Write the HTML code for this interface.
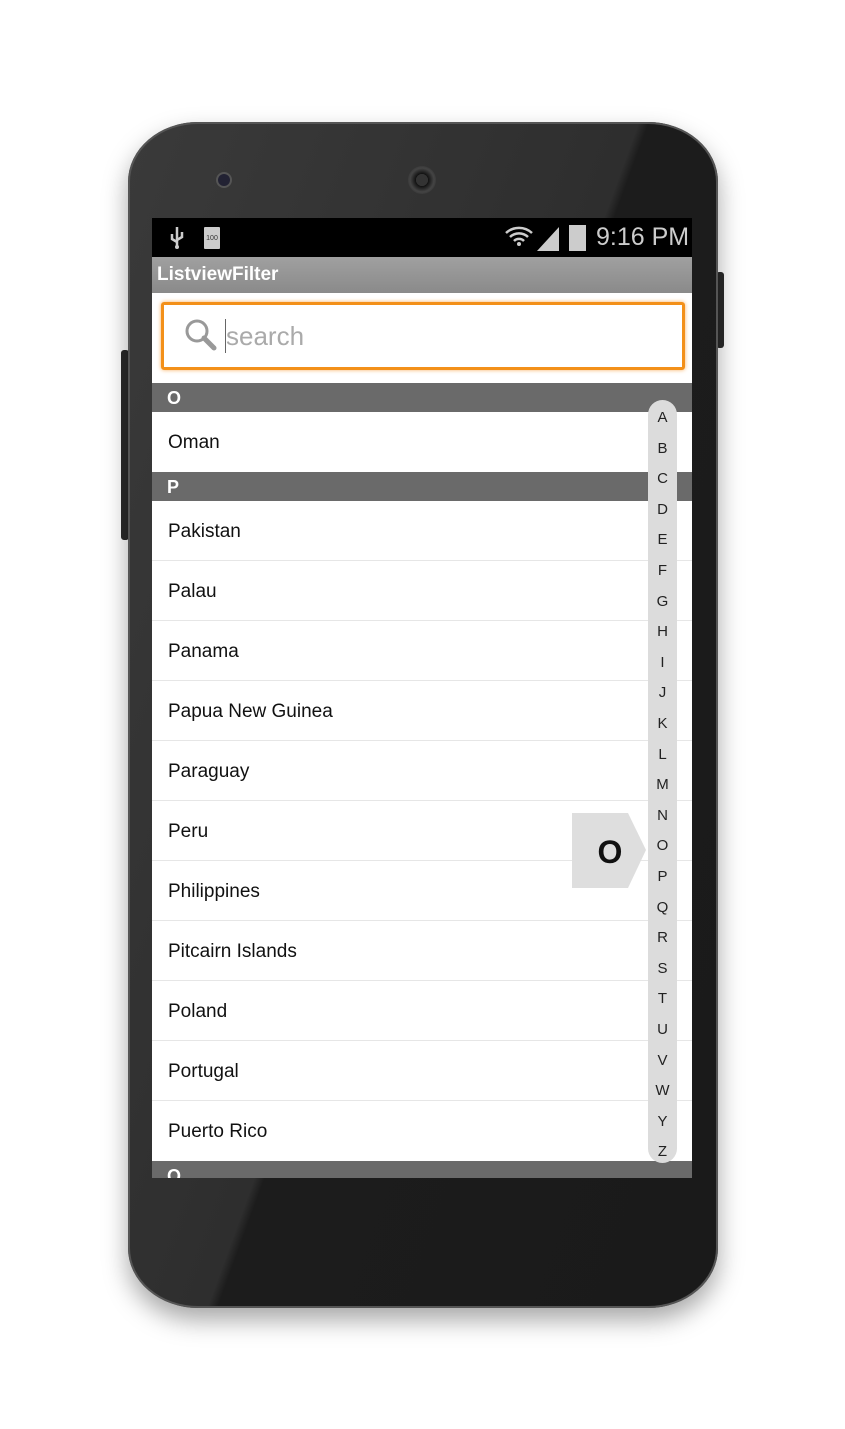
<!DOCTYPE html>
<html><head><style>
body{margin:0;width:845px;height:1429px;background:#fff;position:relative;overflow:hidden;font-family:"Liberation Sans",sans-serif}
.phone{position:absolute;left:128px;top:122px;width:590px;height:1186px;border-radius:70px/60px;background:linear-gradient(110deg,#3a3a3a 0%,#2e2e2e 50%,#1c1c1c 51%,#1a1a1a 100%);box-shadow:0 0 0 2px #555 inset,0 12px 25px rgba(0,0,0,.35)}
.btnl{position:absolute;left:121px;top:350px;width:8px;height:190px;background:#2a2a2a;border-radius:3px}
.btnr{position:absolute;left:716px;top:272px;width:8px;height:76px;background:#2a2a2a;border-radius:3px}
.screen{position:absolute;left:152px;top:218px;width:540px;height:960px;background:#fff;overflow:hidden}
.status{height:39px;background:#000;color:#ccc;position:relative}
.title{height:36px;background:linear-gradient(#a0a0a0,#8a8a8a);color:#fff;font-weight:bold;font-size:19px;line-height:36px;padding-left:5px}
.searchwrap{height:90px;position:relative}
.search{position:absolute;left:9px;top:9px;width:518px;height:62px;border:3px solid #f39019;border-radius:3px;box-shadow:0 0 4px #f8b060}
.hdr{height:29px;background:#6a6a6a;color:#fff;font-weight:bold;font-size:18px;line-height:31px;padding-left:15px}
.row{height:59px;border-bottom:1px solid #e6e6e6;font-size:19px;line-height:62px;padding-left:16px;color:#111}
.idx{position:absolute;left:648px;top:400px;width:29px;height:763px;background:#dcdcdc;border-radius:15px}
.idx div{position:absolute;left:0;width:29px;text-align:center;font-size:15px;color:#222}
</style></head><body>
<div class="btnl"></div><div class="btnr"></div>
<div class="phone">
<div style="position:absolute;left:90px;top:52px;width:12px;height:12px;border-radius:50%;background:#223;box-shadow:0 0 0 2px #555"></div>
<div style="position:absolute;left:280px;top:44px;width:28px;height:28px;border-radius:50%;background:radial-gradient(#333 30%,#111 31%,#444 60%,#222);"></div>
</div>
<div class="screen">
<div class="status">
<svg style="position:absolute;left:16px;top:8px" width="18" height="24" viewBox="0 0 18 24"><path d="M9 1v21M4 8v5l5 3M14 6v5l-5 3" stroke="#ccc" stroke-width="2.5" fill="none"/><circle cx="9" cy="21" r="2" fill="#ccc"/></svg>
<div style="position:absolute;left:52px;top:9px;width:16px;height:22px;background:#ccc;border-radius:1px;font-size:7px;color:#333;text-align:center;line-height:24px">100</div>
<svg style="position:absolute;left:352px;top:6px" width="30" height="26" viewBox="0 0 30 26"><path d="M2 9a19 19 0 0 1 26 0M6 13a13 13 0 0 1 18 0M10 17a7 7 0 0 1 10 0" stroke="#ccc" stroke-width="2.5" fill="none"/><circle cx="15" cy="20" r="2" fill="#ccc"/></svg>
<svg style="position:absolute;left:385px;top:9px" width="22" height="24"><path d="M0 24L22 0V24Z" fill="#ccc"/></svg>
<div style="position:absolute;left:417px;top:7px;width:17px;height:26px;background:#ccc"></div>
<div style="position:absolute;left:444px;top:5px;font-size:25px;color:#ccc">9:16 PM</div>
</div>
<div class="title">ListviewFilter</div>
<div class="searchwrap"><div class="search">
<svg style="position:absolute;left:19px;top:12px" width="36" height="36" viewBox="0 0 36 36"><circle cx="14" cy="14" r="10" stroke="#999" stroke-width="3" fill="none"/><path d="M21 21l10 10" stroke="#999" stroke-width="5" stroke-linecap="round"/></svg>
<div style="position:absolute;left:61px;top:14px;width:1px;height:34px;background:#666"></div>
<div style="position:absolute;left:62px;top:16px;font-size:26px;color:#aaa">search</div>
</div></div>
<div class="hdr">O</div>
<div class="row" style="border:0;height:60px">Oman</div>
<div class="hdr">P</div>
<div class="row">Pakistan</div><div class="row">Palau</div><div class="row">Panama</div><div class="row">Papua New Guinea</div><div class="row">Paraguay</div><div class="row">Peru</div><div class="row">Philippines</div><div class="row">Pitcairn Islands</div><div class="row">Poland</div><div class="row">Portugal</div><div class="row" style="border:0;height:60px">Puerto Rico</div>
<div class="hdr">Q</div>
</div>
<svg style="position:absolute;left:572px;top:813px" width="74" height="75"><path d="M0 0H56L74 37L56 75H0Z" fill="#dedede"/><text x="38" y="50" font-family="Liberation Sans" font-weight="bold" font-size="32" text-anchor="middle" fill="#111">O</text></svg>
<div class="idx">
<div style="top:9px">A</div><div style="top:40px">B</div><div style="top:70px">C</div><div style="top:101px">D</div><div style="top:131px">E</div><div style="top:162px">F</div><div style="top:193px">G</div><div style="top:223px">H</div><div style="top:254px">I</div><div style="top:284px">J</div><div style="top:315px">K</div><div style="top:346px">L</div><div style="top:376px">M</div><div style="top:407px">N</div><div style="top:437px">O</div><div style="top:468px">P</div><div style="top:499px">Q</div><div style="top:529px">R</div><div style="top:560px">S</div><div style="top:590px">T</div><div style="top:621px">U</div><div style="top:652px">V</div><div style="top:682px">W</div><div style="top:713px">Y</div><div style="top:743px">Z</div>
</div>
</body></html>
